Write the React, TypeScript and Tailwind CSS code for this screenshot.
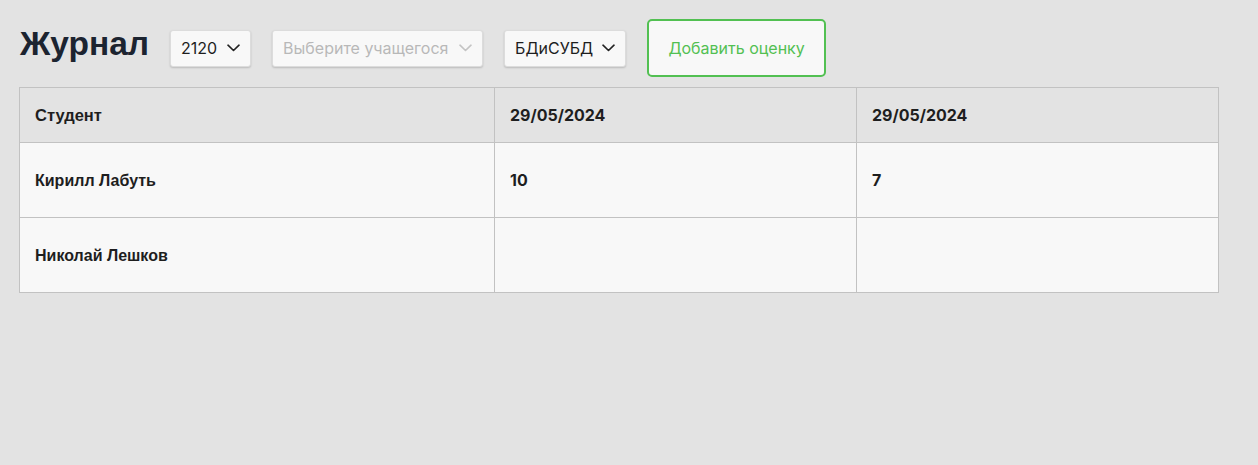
import React from "react";

const Chevron = ({ color = "#222" }: { color?: string }) => (
  <svg width="13" height="8" viewBox="0 0 13 8" fill="none">
    <path d="M1 1.2 L6.5 6.5 L12 1.2" stroke={color} strokeWidth="1.6" strokeLinecap="round" strokeLinejoin="round" />
  </svg>
);

const Sel = ({ text, w, muted }: { text: string; w: string; muted?: boolean }) => (
  <div
    className={`${w} h-[37px] flex items-center justify-between pl-[10px] pr-[10px] bg-[#f8f8f8] rounded-[3px] border border-[#dcdcdc] shadow-[0_1px_2px_rgba(0,0,0,0.18)] text-[16px]`}
    style={{ fontFamily: "Inter, 'Liberation Sans', sans-serif" }}
  >
    <span className={muted ? "text-[#b8b8b8]" : "text-[#1e1e1e]"}>{text}</span>
    <Chevron color={muted ? "#c4c4c4" : "#222"} />
  </div>
);

export default function App() {
  const bold = { fontFamily: "'Liberation Sans', Arial, sans-serif" };
  const inter = { fontFamily: "Inter, 'Liberation Sans', sans-serif" };
  return (
    <div className="min-h-[465px] w-full bg-[#e3e3e3] pl-[19px] pt-[19px]">
      <div className="flex items-center gap-[21px] h-[58px]">
        <h1 className="text-[33.5px] font-bold text-[#1c2430] leading-none -mt-[8px] pl-[1px]" style={bold}>
          Журнал
        </h1>
        <Sel text="2120" w="w-[81px]" />
        <Sel text="Выберите учащегося" w="w-[211px]" muted />
        <Sel text="БДиСУБД" w="w-[122px]" />
        <button
          className="h-[58px] w-[179px] rounded-[5px] border-2 border-[#52c052] bg-[#f8f8f8] text-[#52c052] text-[16px]"
          style={inter}
        >
          Добавить оценку
        </button>
      </div>
      <table className="mt-[10px] border-collapse w-[1199px] table-fixed">
        <colgroup>
          <col className="w-[475px]" />
          <col className="w-[362px]" />
          <col className="w-[362px]" />
        </colgroup>
        <thead>
          <tr className="h-[55px] bg-[#e3e3e3]">
            <th className="border border-[#c2c2c2] text-left pl-[15px] text-[16.5px] font-bold text-[#1e1e1e]" style={bold}>
              Студент
            </th>
            <th className="border border-[#c2c2c2] text-left pl-[15px] text-[16px] font-bold text-[#1e1e1e]" style={inter}>
              29/05/2024
            </th>
            <th className="border border-[#c2c2c2] text-left pl-[15px] text-[16px] font-bold text-[#1e1e1e]" style={inter}>
              29/05/2024
            </th>
          </tr>
        </thead>
        <tbody>
          <tr className="h-[75px] bg-[#f8f8f8]">
            <td className="border border-[#c2c2c2] pl-[15px] text-[16px] font-bold text-[#1e1e1e] pt-[2px]" style={bold}>
              Кирилл Лабуть
            </td>
            <td className="border border-[#c2c2c2] pl-[15px] text-[16px] font-bold text-[#1e1e1e]" style={inter}>
              10
            </td>
            <td className="border border-[#c2c2c2] pl-[15px] text-[16px] font-bold text-[#1e1e1e]" style={inter}>
              7
            </td>
          </tr>
          <tr className="h-[75px] bg-[#f8f8f8]">
            <td className="border border-[#c2c2c2] pl-[15px] text-[16px] font-bold text-[#1e1e1e] pt-[2px]" style={bold}>
              Николай Лешков
            </td>
            <td className="border border-[#c2c2c2] pl-[15px]" />
            <td className="border border-[#c2c2c2] pl-[15px]" />
          </tr>
        </tbody>
      </table>
    </div>
  );
}
